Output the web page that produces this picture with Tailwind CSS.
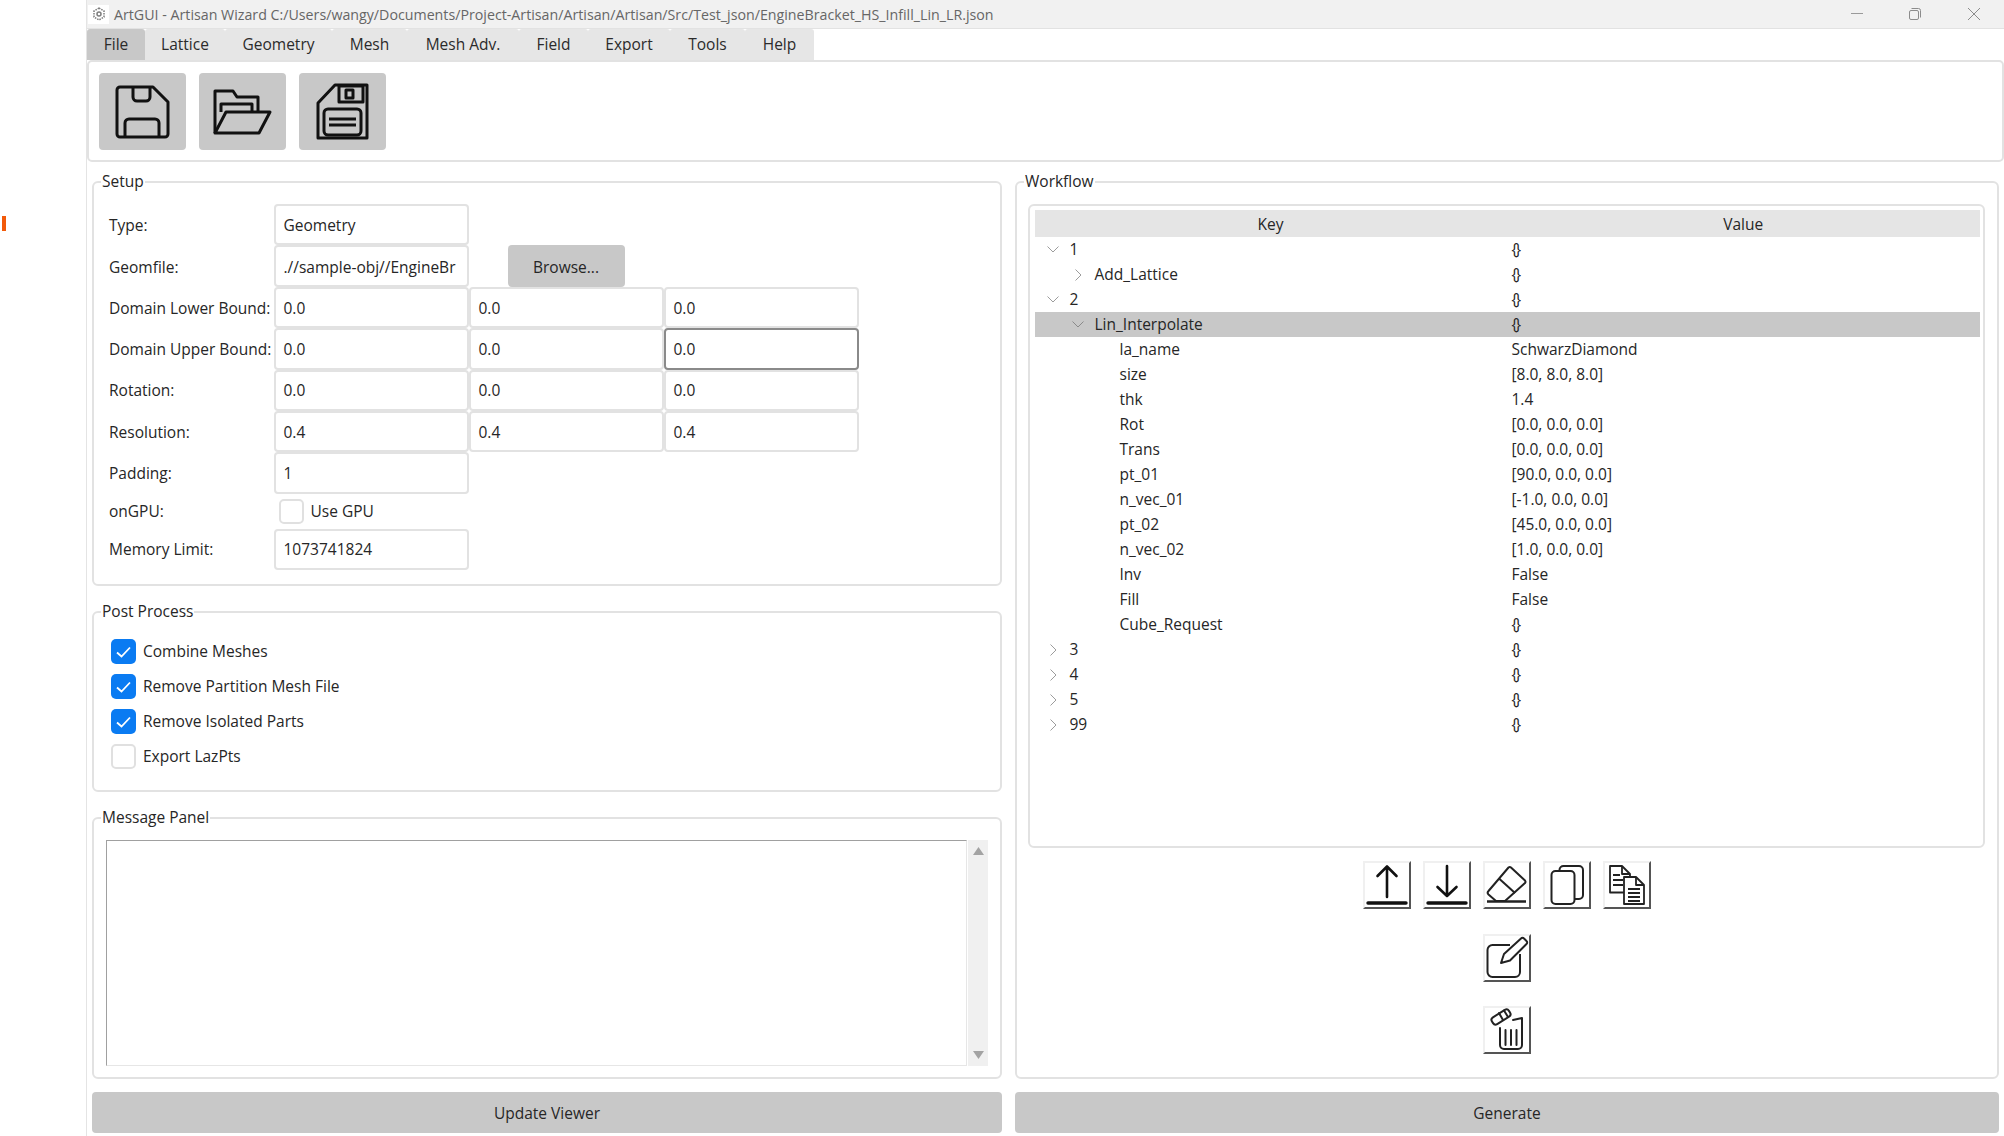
<!DOCTYPE html>
<html lang="en">
  <head>
    <meta charset="UTF-8" />
    <title>ArtGUI</title>
    <script src="https://cdn.jsdelivr.net/npm/@tailwindcss/browser@4"></script>
  </head>
  <body class="bg-white">
    <div class="flex w-[2004px] h-[1136px] overflow-hidden font-['Open_Sans',sans-serif] text-[15.5px] text-[#262626]">

      <!-- left strip -->
      <div class="w-[86px] shrink-0 pt-[216px] pl-[2px]">
        <div class="w-[4px] h-[15px] bg-[#f25a0a]"></div>
      </div>

      <div class="flex-1 flex flex-col border-l border-[#e4e4e4]">
        <!-- title bar -->
        <div class="h-[29px] shrink-0 flex items-center bg-[#f1f1f1] border-b border-[#e2e2e2]">
          <div class="w-[21px] h-[19px] ml-[1px] bg-white flex items-center justify-center">
            <svg width="12" height="14" viewBox="0 0 12 14" fill="none" stroke="#7d7d7d" stroke-width="1.5">
              <path d="M6 1L11 4V10L6 13L1 10V4Z" stroke-dasharray="1.6 1"/>
              <circle cx="6" cy="7" r="2"/>
            </svg>
          </div>
          <span class="ml-[5px] pt-[1px] text-[#666] text-[14.23px] whitespace-nowrap">ArtGUI - Artisan Wizard C:/Users/wangy/Documents/Project-Artisan/Artisan/Artisan/Src/Test_json/EngineBracket_HS_Infill_Lin_LR.json</span>
          <div class="ml-auto flex items-center pr-[24px]">
            <svg width="12" height="12" viewBox="0 0 12 12" class="mr-[46px]" stroke="#9a9a9a" fill="none"><path d="M0 5.5h12"/></svg>
            <svg width="12" height="12" viewBox="0 0 12 12" class="mr-[47px]" stroke="#8c8c8c" fill="none"><rect x="0.5" y="2.5" width="9" height="9" rx="1.5"/><path d="M2.5 0.5h7a2 2 0 0 1 2 2v7"/></svg>
            <svg width="12" height="12" viewBox="0 0 12 12" stroke="#8c8c8c" fill="none"><path d="M0 0l12 12M12 0L0 12"/></svg>
          </div>
        </div>

        <!-- menu tabs -->
        <div class="h-[31px] shrink-0 flex text-[#2b2b2b]">
          <div class="w-[58px] flex items-center justify-center rounded-t-[3px] bg-[#c8c8c8]">File</div>
          <div class="w-[80px] flex items-center justify-center rounded-t-[3px] bg-[#e6e6e6]">Lattice</div>
          <div class="w-[107px] flex items-center justify-center rounded-t-[3px] bg-[#e6e6e6]">Geometry</div>
          <div class="w-[75px] flex items-center justify-center rounded-t-[3px] bg-[#e6e6e6]">Mesh</div>
          <div class="w-[112px] flex items-center justify-center rounded-t-[3px] bg-[#e6e6e6]">Mesh Adv.</div>
          <div class="w-[69px] flex items-center justify-center rounded-t-[3px] bg-[#e6e6e6]">Field</div>
          <div class="w-[82px] flex items-center justify-center rounded-t-[3px] bg-[#e6e6e6]">Export</div>
          <div class="w-[75px] flex items-center justify-center rounded-t-[3px] bg-[#e6e6e6]">Tools</div>
          <div class="w-[69px] flex items-center justify-center rounded-t-[3px] bg-[#e6e6e6]">Help</div>
        </div>

        <!-- toolbar -->
        <div class="h-[102px] shrink-0 flex items-start gap-[13px] pl-[10px] pt-[11px] border-2 border-[#e2e2e2] rounded-[5px]">
          <div class="w-[87px] h-[77px] rounded-[4px] bg-[#c8c8c8] flex items-center justify-center">
            <svg width="55" height="54" viewBox="0 0 55 54" fill="none" stroke="#111" stroke-width="3" stroke-linejoin="round">
              <path d="M5 2H38L53 17V49a3 3 0 0 1-3 3H5a3 3 0 0 1-3-3V5a3 3 0 0 1 3-3z"/>
              <path d="M18 2V12a4 4 0 0 0 4 4H31a4 4 0 0 0 4-4V2"/>
              <path d="M10 52V38a4 4 0 0 1 4-4H40a4 4 0 0 1 4 4V52"/>
            </svg>
          </div>
          <div class="w-[87px] h-[77px] rounded-[4px] bg-[#c8c8c8] flex items-center justify-center">
            <svg width="59" height="46" viewBox="0 0 59 46" fill="none" stroke="#111" stroke-width="3" stroke-linejoin="round">
              <path d="M2 44V2H20L24 8H45V23"/>
              <path d="M8 23V15H39V23"/>
              <path d="M2 44L13 23H57L46 44Z"/>
            </svg>
          </div>
          <div class="w-[87px] h-[77px] rounded-[4px] bg-[#c8c8c8] flex items-center justify-center">
            <svg width="53" height="57" viewBox="0 0 53 57" fill="none" stroke="#111" stroke-width="3" stroke-linejoin="round">
              <path d="M2 55V20L19 2H51V55Z"/>
              <rect x="23" y="3" width="24" height="16"/>
              <rect x="30" y="7" width="7" height="8"/>
              <rect x="8" y="26" width="37" height="26" rx="4"/>
              <path d="M13 36H40M13 42H40"/>
            </svg>
          </div>
        </div>

        <!-- panels -->
        <div class="flex-1 grid grid-cols-[910px_984px] gap-x-[13px] pl-[5px] pt-[19px] content-start">
          <div class="flex flex-col gap-[25px] h-[898px]">

            <!-- setup -->
            <div class="relative h-[405px] shrink-0 border-2 border-[#e2e2e2] rounded-[6px] pl-[15px] pt-[21px]">
              <div class="absolute -top-[12px] left-[7px] bg-white px-[1px] leading-[20px]">Setup</div>
              <div class="grid grid-cols-[164.5px_195px_195px_195px] grid-rows-[repeat(7,41.4px)_35px_41.4px]">
                <div class="flex items-center pt-[2px]">Type:</div>
                <div class="flex items-center border-2 border-[#e2e2e2] rounded-[4px] pl-[8px] pt-[2px] whitespace-nowrap">Geometry</div>
                <div></div><div></div>

                <div class="flex items-center pt-[3px]">Geomfile:</div>
                <div class="flex items-center border-2 border-[#e2e2e2] rounded-[4px] pl-[8px] pt-[3px] whitespace-nowrap">.//sample-obj//EngineBr</div>
                <div class="col-span-2 flex items-stretch pl-[39px]">
                  <div class="w-[117px] pt-[3px] rounded-[4px] bg-[#c8c8c8] flex items-center justify-center">Browse...</div>
                </div>

                <div class="flex items-center pt-[2px] whitespace-nowrap">Domain Lower Bound:</div>
                <div class="flex items-center border-2 border-[#e2e2e2] rounded-[4px] pl-[8px] pt-[2px]">0.0</div>
                <div class="flex items-center border-2 border-[#e2e2e2] rounded-[4px] pl-[8px] pt-[2px]">0.0</div>
                <div class="flex items-center border-2 border-[#e2e2e2] rounded-[4px] pl-[8px] pt-[2px]">0.0</div>

                <div class="flex items-center pt-[2px] whitespace-nowrap">Domain Upper Bound:</div>
                <div class="flex items-center border-2 border-[#e2e2e2] rounded-[4px] pl-[8px] pt-[2px]">0.0</div>
                <div class="flex items-center border-2 border-[#e2e2e2] rounded-[4px] pl-[8px] pt-[2px]">0.0</div>
                <div class="flex items-center border-2 border-[#8a8a8a] rounded-[4px] pl-[8px] pt-[2px]">0.0</div>

                <div class="flex items-center pt-[1px]">Rotation:</div>
                <div class="flex items-center border-2 border-[#e2e2e2] rounded-[4px] pl-[8px] pt-[1px]">0.0</div>
                <div class="flex items-center border-2 border-[#e2e2e2] rounded-[4px] pl-[8px] pt-[1px]">0.0</div>
                <div class="flex items-center border-2 border-[#e2e2e2] rounded-[4px] pl-[8px] pt-[1px]">0.0</div>

                <div class="flex items-center pt-[2px]">Resolution:</div>
                <div class="flex items-center border-2 border-[#e2e2e2] rounded-[4px] pl-[8px] pt-[2px]">0.4</div>
                <div class="flex items-center border-2 border-[#e2e2e2] rounded-[4px] pl-[8px] pt-[2px]">0.4</div>
                <div class="flex items-center border-2 border-[#e2e2e2] rounded-[4px] pl-[8px] pt-[2px]">0.4</div>

                <div class="flex items-center pt-[2px]">Padding:</div>
                <div class="flex items-center border-2 border-[#e2e2e2] rounded-[4px] pl-[8px] pt-[2px]">1</div>
                <div></div><div></div>

                <div class="flex items-center">onGPU:</div>
                <div class="flex items-center pl-[5px] gap-[7px] whitespace-nowrap">
                  <div class="w-[25px] h-[25px] border-2 border-[#e0e0e0] rounded-[5px]"></div>
                  Use GPU
                </div>
                <div></div><div></div>

                <div class="flex items-center">Memory Limit:</div>
                <div class="flex items-center border-2 border-[#e2e2e2] rounded-[4px] pl-[8px]">1073741824</div>
                <div></div><div></div>
              </div>
            </div>

            <!-- post process -->
            <div class="relative h-[181px] shrink-0 border-2 border-[#e2e2e2] rounded-[6px] pl-[17px] pt-[26px]">
              <div class="absolute -top-[12px] left-[7px] bg-white px-[1px] leading-[20px]">Post Process</div>
              <div class="flex flex-col gap-[10px]">
                <div class="h-[25px] flex items-center gap-[7px]">
                  <div class="w-[25px] h-[25px] rounded-[5px] bg-[#0a7bf2] flex items-center justify-center">
                    <svg width="15" height="12" viewBox="0 0 15 12" fill="none" stroke="#fff" stroke-width="1.8"><path d="M1 6.5L5.5 10.5L14 1.5"/></svg>
                  </div>
                  Combine Meshes
                </div>
                <div class="h-[25px] flex items-center gap-[7px]">
                  <div class="w-[25px] h-[25px] rounded-[5px] bg-[#0a7bf2] flex items-center justify-center">
                    <svg width="15" height="12" viewBox="0 0 15 12" fill="none" stroke="#fff" stroke-width="1.8"><path d="M1 6.5L5.5 10.5L14 1.5"/></svg>
                  </div>
                  Remove Partition Mesh File
                </div>
                <div class="h-[25px] flex items-center gap-[7px]">
                  <div class="w-[25px] h-[25px] rounded-[5px] bg-[#0a7bf2] flex items-center justify-center">
                    <svg width="15" height="12" viewBox="0 0 15 12" fill="none" stroke="#fff" stroke-width="1.8"><path d="M1 6.5L5.5 10.5L14 1.5"/></svg>
                  </div>
                  Remove Isolated Parts
                </div>
                <div class="h-[25px] flex items-center gap-[7px]">
                  <div class="w-[25px] h-[25px] border-2 border-[#e0e0e0] rounded-[5px]"></div>
                  Export LazPts
                </div>
              </div>
            </div>

            <!-- message panel -->
            <div class="relative h-[262px] shrink-0 border-2 border-[#e2e2e2] rounded-[6px] pl-[12px] pt-[21px]">
              <div class="absolute -top-[12px] left-[7px] bg-white px-[1px] leading-[20px]">Message Panel</div>
              <div class="flex h-[226px]">
                <div class="w-[861px] border border-[#e6e6e6] border-t-[#a0a0a0] border-l-[#a0a0a0]"></div>
                <div class="w-[20px] ml-[1px] bg-[#f0f0f0] flex flex-col items-center justify-between py-[7px]">
                  <svg width="11" height="8" viewBox="0 0 11 8" fill="#a3a3a3"><path d="M5.5 0L11 8H0Z"/></svg>
                  <svg width="11" height="8" viewBox="0 0 11 8" fill="#a3a3a3"><path d="M5.5 8L11 0H0Z"/></svg>
                </div>
              </div>
            </div>
          </div>

          <!-- workflow -->
          <div class="relative h-[898px] border-2 border-[#e2e2e2] rounded-[6px] pl-[11px] pr-[12px] pt-[21px] flex flex-col">
            <div class="absolute -top-[12px] left-[7px] bg-white px-[1px] leading-[20px]">Workflow</div>
            <div class="h-[644px] shrink-0 border-2 border-[#e2e2e2] rounded-[6px] pt-[4px] pl-[4.5px] pr-[3px]">
              <div class="grid grid-cols-[472px_1fr] h-[27px] pt-[2px] bg-[#e5e5e5] items-center text-center">
                <div>Key</div>
                <div>Value</div>
              </div>
              <div class="grid grid-cols-[472px_1fr] auto-rows-[25px] items-center">
                <div class="flex items-center pl-[12px] h-full"><svg width="12" height="7" viewBox="0 0 12 7" fill="none" stroke="#9c9c9c"><path d="M0.5 0.5L6 6L11.5 0.5"/></svg><span class="ml-[11px]">1</span></div>
                <div class="pl-[5px] tracking-[-2px]">{}</div>
                <div class="flex items-center pl-[40px] h-full"><svg width="7" height="12" viewBox="0 0 7 12" fill="none" stroke="#9c9c9c"><path d="M0.5 0.5L6 6L0.5 11.5"/></svg><span class="ml-[13px]">Add_Lattice</span></div>
                <div class="pl-[5px] tracking-[-2px]">{}</div>
                <div class="flex items-center pl-[12px] h-full"><svg width="12" height="7" viewBox="0 0 12 7" fill="none" stroke="#9c9c9c"><path d="M0.5 0.5L6 6L11.5 0.5"/></svg><span class="ml-[11px]">2</span></div>
                <div class="pl-[5px] tracking-[-2px]">{}</div>
                <div class="flex items-center pl-[37px] h-full bg-[#c8c8c8]"><svg width="12" height="7" viewBox="0 0 12 7" fill="none" stroke="#8a8a8a"><path d="M0.5 0.5L6 6L11.5 0.5"/></svg><span class="ml-[11px]">Lin_Interpolate</span></div>
                <div class="pl-[5px] tracking-[-2px] h-full flex items-center bg-[#c8c8c8]">{}</div>
                <div class="pl-[85px]">la_name</div><div class="pl-[5px]">SchwarzDiamond</div>
                <div class="pl-[85px]">size</div><div class="pl-[5px]">[8.0, 8.0, 8.0]</div>
                <div class="pl-[85px]">thk</div><div class="pl-[5px]">1.4</div>
                <div class="pl-[85px]">Rot</div><div class="pl-[5px]">[0.0, 0.0, 0.0]</div>
                <div class="pl-[85px]">Trans</div><div class="pl-[5px]">[0.0, 0.0, 0.0]</div>
                <div class="pl-[85px]">pt_01</div><div class="pl-[5px]">[90.0, 0.0, 0.0]</div>
                <div class="pl-[85px]">n_vec_01</div><div class="pl-[5px]">[-1.0, 0.0, 0.0]</div>
                <div class="pl-[85px]">pt_02</div><div class="pl-[5px]">[45.0, 0.0, 0.0]</div>
                <div class="pl-[85px]">n_vec_02</div><div class="pl-[5px]">[1.0, 0.0, 0.0]</div>
                <div class="pl-[85px]">Inv</div><div class="pl-[5px]">False</div>
                <div class="pl-[85px]">Fill</div><div class="pl-[5px]">False</div>
                <div class="pl-[85px]">Cube_Request</div><div class="pl-[5px] tracking-[-2px]">{}</div>
                <div class="flex items-center pl-[15px] h-full"><svg width="7" height="12" viewBox="0 0 7 12" fill="none" stroke="#9c9c9c"><path d="M0.5 0.5L6 6L0.5 11.5"/></svg><span class="ml-[13px]">3</span></div>
                <div class="pl-[5px] tracking-[-2px]">{}</div>
                <div class="flex items-center pl-[15px] h-full"><svg width="7" height="12" viewBox="0 0 7 12" fill="none" stroke="#9c9c9c"><path d="M0.5 0.5L6 6L0.5 11.5"/></svg><span class="ml-[13px]">4</span></div>
                <div class="pl-[5px] tracking-[-2px]">{}</div>
                <div class="flex items-center pl-[15px] h-full"><svg width="7" height="12" viewBox="0 0 7 12" fill="none" stroke="#9c9c9c"><path d="M0.5 0.5L6 6L0.5 11.5"/></svg><span class="ml-[13px]">5</span></div>
                <div class="pl-[5px] tracking-[-2px]">{}</div>
                <div class="flex items-center pl-[15px] h-full"><svg width="7" height="12" viewBox="0 0 7 12" fill="none" stroke="#9c9c9c"><path d="M0.5 0.5L6 6L0.5 11.5"/></svg><span class="ml-[13px]">99</span></div>
                <div class="pl-[5px] tracking-[-2px]">{}</div>
              </div>
            </div>

            <!-- workflow buttons -->
            <div class="flex flex-col items-center pt-[13px] gap-[25px]">
              <div class="flex gap-[12px]">
                <div class="w-[48px] h-[48px] border-2 border-[#f0f0f0] border-r-[#555] border-b-[#555]">
                  <svg width="44" height="44" viewBox="2 2 44 44" fill="none" stroke="#111" stroke-width="2.6" stroke-linecap="round" stroke-linejoin="round">
                    <path d="M24 6V36M14.5 15L24 5.5L33.5 15"/><path d="M5 42H43" stroke-width="3.4"/>
                  </svg>
                </div>
                <div class="w-[48px] h-[48px] border-2 border-[#f0f0f0] border-r-[#555] border-b-[#555]">
                  <svg width="44" height="44" viewBox="2 2 44 44" fill="none" stroke="#111" stroke-width="2.6" stroke-linecap="round" stroke-linejoin="round">
                    <path d="M24 5V34M14.5 26L24 35L33.5 26"/><path d="M5 42H43" stroke-width="3.4"/>
                  </svg>
                </div>
                <div class="w-[48px] h-[48px] border-2 border-[#f0f0f0] border-r-[#555] border-b-[#555]">
                  <svg width="44" height="44" viewBox="2 2 44 44" fill="none" stroke="#222" stroke-width="2" stroke-linejoin="round">
                    <path d="M25.5 6.5a2 2 0 0 1 2.5 0L42 19.5a2 2 0 0 1 0 2.5L22 40H13L5.5 33.5a2.5 2.5 0 0 1 0-3.5Z"/>
                    <path d="M16 17.5L32 32"/><path d="M4 40.5H43" stroke-width="2.4"/>
                  </svg>
                </div>
                <div class="w-[48px] h-[48px] border-2 border-[#f0f0f0] border-r-[#555] border-b-[#555]">
                  <svg width="44" height="44" viewBox="2 2 44 44" fill="none" stroke="#222" stroke-width="2">
                    <rect x="8.5" y="10" width="23" height="33" rx="4"/>
                    <path d="M16.5 10V9a4 4 0 0 1 4-4H36a4 4 0 0 1 4 4V34a4 4 0 0 1-4 4H32"/>
                  </svg>
                </div>
                <div class="w-[48px] h-[48px] border-2 border-[#f0f0f0] border-r-[#555] border-b-[#555]">
                  <svg width="44" height="44" viewBox="2 2 44 44" fill="none" stroke="#222" stroke-width="1.8" stroke-linejoin="round">
                    <path d="M21 31.5H7V5H19L27 13V16"/><path d="M19 5V13H27"/>
                    <path d="M10 14H17M10 19H20M10 24H20" />
                    <path d="M21 16H33L41 24V43H21Z"/><path d="M33 16V24H41"/>
                    <path d="M25 28H37M25 32H37M25 36H37M25 40H37"/>
                  </svg>
                </div>
              </div>
              <div class="w-[48px] h-[48px] border-2 border-[#f0f0f0] border-r-[#555] border-b-[#555]">
                <svg width="44" height="44" viewBox="2 2 44 44" fill="none" stroke="#222" stroke-width="2" stroke-linejoin="round">
                  <path d="M27 11H9.5a5 5 0 0 0-5 5V38a5 5 0 0 0 5 5H32a5 5 0 0 0 5-5V20"/>
                  <path d="M18 29L21 20L38 4.5a2 2 0 0 1 3 0L43.5 7a2 2 0 0 1 0 3L27 26.5Z"/>
                </svg>
              </div>
              <div class="w-[48px] h-[48px] -mt-[1px] border-2 border-[#f0f0f0] border-r-[#555] border-b-[#555]">
                <svg width="44" height="44" viewBox="2 2 44 44" fill="none" stroke="#222" stroke-width="2" stroke-linejoin="round" stroke-linecap="round">
                  <path d="M17 22V39a4 4 0 0 0 4 4H35a4 4 0 0 0 4-4V12L30 14"/>
                  <path d="M22.5 24V39M28 24V39M33.5 24V39"/>
                  <rect x="8" y="7" width="20" height="8" rx="3" transform="rotate(-32 18 11)"/>
                  <path d="M16 7L20 14M21 4.5L25 11"/>
                </svg>
              </div>
            </div>
          </div>

          <!-- bottom buttons -->
          <div class="h-[41px] mt-[13px] pt-[2px] rounded-[4px] bg-[#c8c8c8] flex items-center justify-center">Update Viewer</div>
          <div class="h-[41px] mt-[13px] pt-[2px] rounded-[4px] bg-[#c8c8c8] flex items-center justify-center">Generate</div>
        </div>
      </div>
    </div>
  </body>
</html>
